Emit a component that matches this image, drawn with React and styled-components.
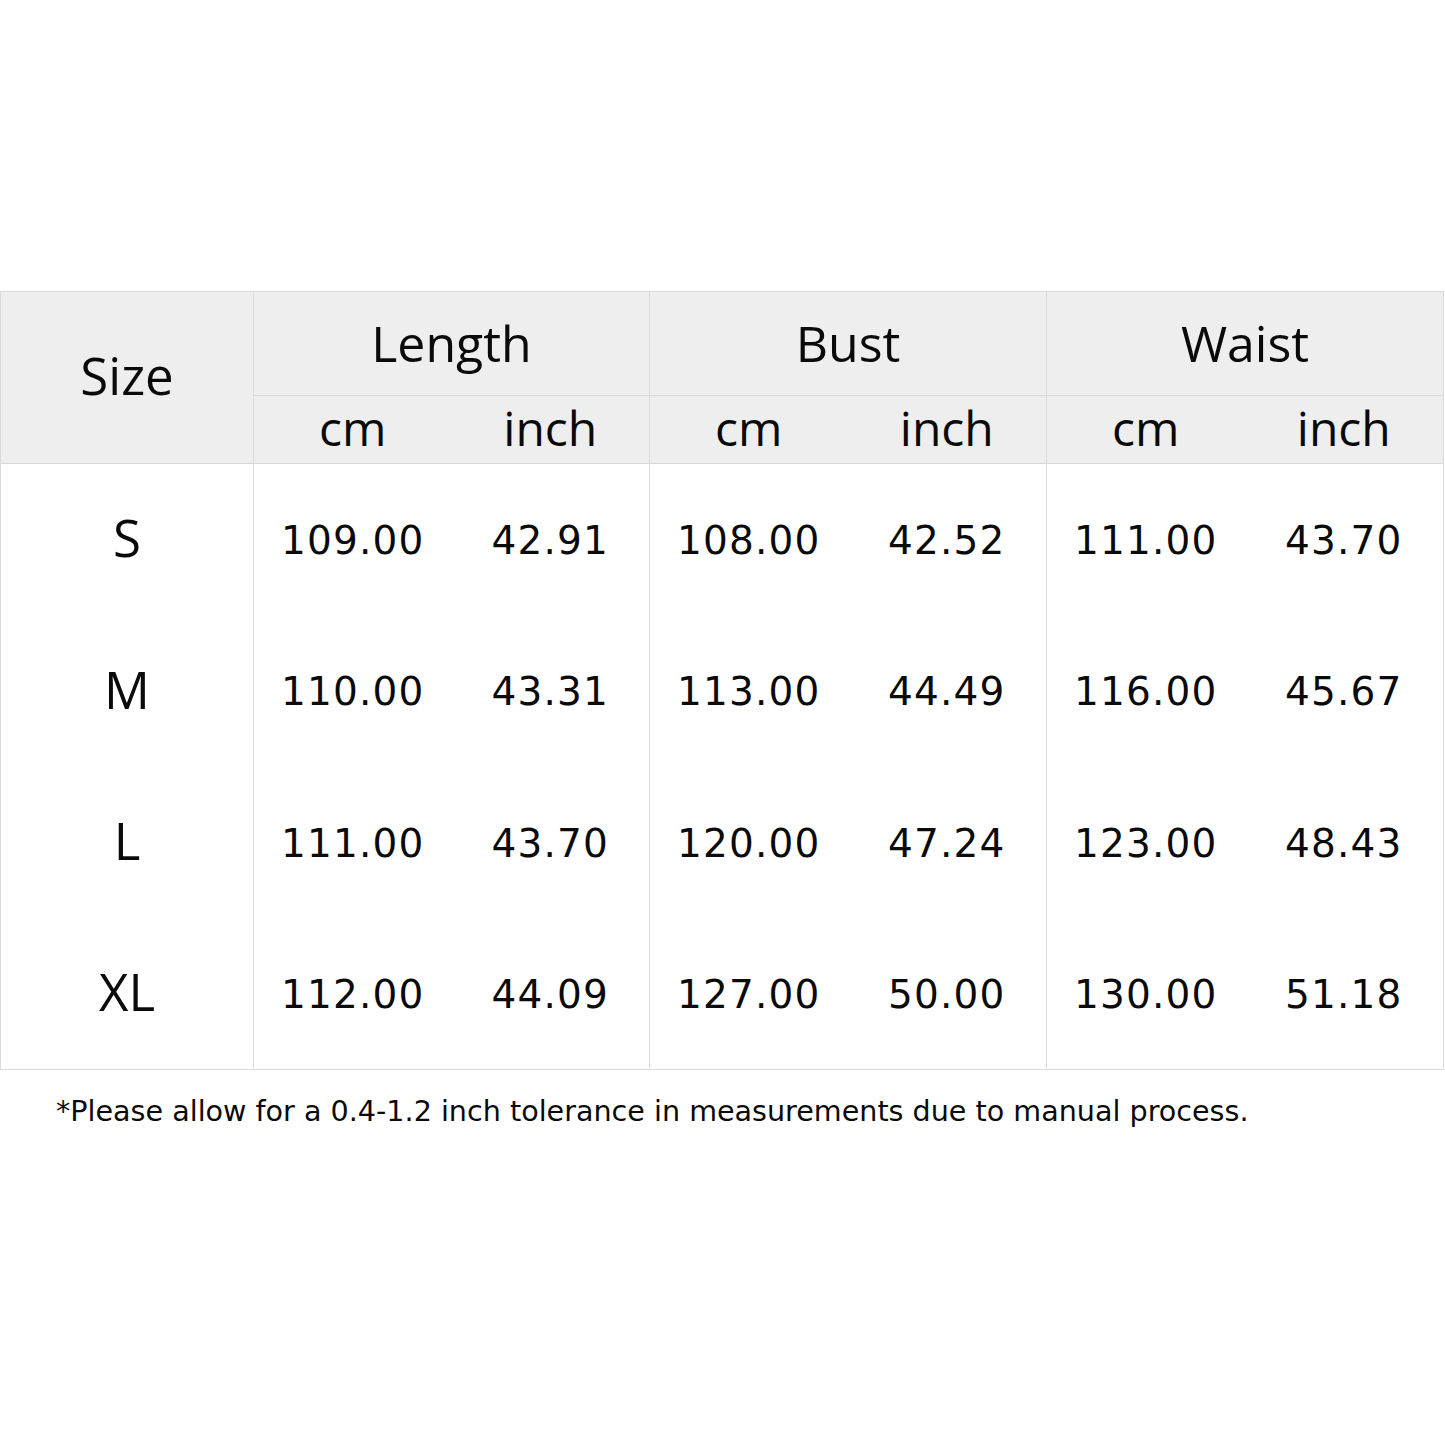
import React from 'react';
import styled, { createGlobalStyle } from 'styled-components';

const GlobalStyle = createGlobalStyle`
  html, body {
    margin: 0;
    padding: 0;
    background: #fff;
  }
`;

const Page = styled.div`
  width: 1445px;
  height: 1445px;
  padding-top: 291px;
  box-sizing: border-box;
  background: #fff;
`;

const Table = styled.table`
  width: 1444px;
  border-collapse: collapse;
  table-layout: fixed;
  color: #0a0a0a;
  line-height: 1;
`;

const Col = styled.col`
  width: ${({ w }) => w}px;
`;

const HeadCell = styled.th`
  background: #eeeeee;
  border: 1px solid #dadada;
  font-family: 'Open Sans', 'Liberation Sans', sans-serif;
  font-weight: 400;
  font-size: ${({ big }) => (big ? '51px' : '50px')};
  height: 104px;
  box-sizing: border-box;
  padding: ${({ big }) => (big ? '0 0 4px' : '0 0 2px')};
  text-align: center;
  vertical-align: middle;
`;

const UnitCell = styled.th`
  background: #eeeeee;
  border-bottom: 1px solid #dadada;
  border-left: ${({ first }) => (first ? '1px solid #dadada' : 'none')};
  border-right: ${({ last }) => (last ? '1px solid #dadada' : 'none')};
  font-family: 'Open Sans', 'Liberation Sans', sans-serif;
  font-weight: 400;
  font-size: 48px;
  height: 68px;
  box-sizing: border-box;
  padding: 0 0 3px;
  text-align: center;
`;

const SizeCell = styled.td`
  border: 1px solid #dadada;
  border-top: none;
  border-bottom: ${({ last }) => (last ? '1px solid #dadada' : 'none')};
  font-family: 'Open Sans', 'Liberation Sans', sans-serif;
  font-size: 51px;
  height: ${({ h }) => h}px;
  box-sizing: border-box;
  padding: 0 0 3px;
  text-align: center;
`;

const ValueCell = styled.td`
  border-right: ${({ groupEnd }) => (groupEnd ? '1px solid #dadada' : 'none')};
  border-bottom: ${({ last }) => (last ? '1px solid #dadada' : 'none')};
  font-family: 'DejaVu Sans', Verdana, sans-serif;
  font-size: 39px;
  letter-spacing: 1.2px;
  padding: 2px 0 0;
  text-align: center;
`;

const Note = styled.p`
  margin: 24px 0 0 56px;
  font-family: 'DejaVu Sans', Verdana, sans-serif;
  font-size: 28.6px;
  line-height: 1.2;
  color: #0a0a0a;
`;

const rows = [
  ['S', '109.00', '42.91', '108.00', '42.52', '111.00', '43.70'],
  ['M', '110.00', '43.31', '113.00', '44.49', '116.00', '45.67'],
  ['L', '111.00', '43.70', '120.00', '47.24', '123.00', '48.43'],
  ['XL', '112.00', '44.09', '127.00', '50.00', '130.00', '51.18'],
];

const rowHeights = [151, 152, 151, 152];
const groups = ['Length', 'Bust', 'Waist'];
const widths = [253, 198, 198, 198, 199, 198, 199];

export default function App() {
  return (
    <Page>
      <GlobalStyle />
      <Table>
        <colgroup>
          {widths.map((w, i) => (
            <Col key={i} w={w} />
          ))}
        </colgroup>
        <thead>
          <tr>
            <HeadCell rowSpan={2} big>
              Size
            </HeadCell>
            {groups.map(g => (
              <HeadCell key={g} colSpan={2}>
                {g}
              </HeadCell>
            ))}
          </tr>
          <tr>
            {groups.map(g => (
              <React.Fragment key={g}>
                <UnitCell first>cm</UnitCell>
                <UnitCell last>inch</UnitCell>
              </React.Fragment>
            ))}
          </tr>
        </thead>
        <tbody>
          {rows.map((r, i) => {
            const last = i === rows.length - 1;
            return (
              <tr key={r[0]}>
                <SizeCell last={last} h={rowHeights[i]}>
                  {r[0]}
                </SizeCell>
                {r.slice(1).map((v, j) => (
                  <ValueCell key={j} groupEnd={j % 2 === 1} last={last}>
                    {v}
                  </ValueCell>
                ))}
              </tr>
            );
          })}
        </tbody>
      </Table>
      <Note>*Please allow for a 0.4-1.2 inch tolerance in measurements due to manual process.</Note>
    </Page>
  );
}
